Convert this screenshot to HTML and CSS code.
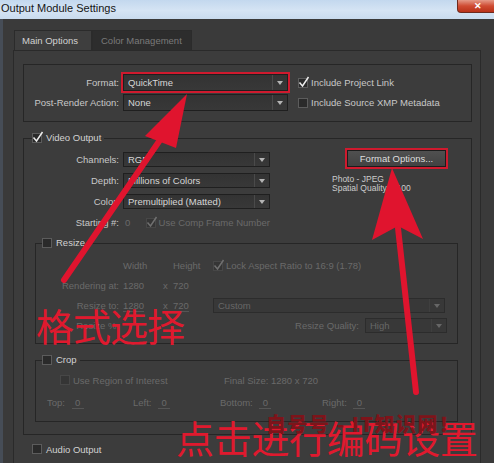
FILE: index.html
```html
<!DOCTYPE html>
<html>
<head>
<meta charset="utf-8">
<title>Output Module Settings</title>
<link rel="stylesheet" href="styles.css">
</head>
<body>
<div class="titlebar">
  <span class="title">Output Module Settings</span>
  <span class="close">✕</span>
</div>
<div class="dialog">
  <div class="tabs">
    <div class="tab active">Main Options</div>
    <div class="tab">Color Management</div>
  </div>
  <div class="panel">
    <div class="topbox">
      <div class="row">
        <span class="lbl">Format:</span>
        <div class="select w165 hl"><span class="val">QuickTime</span><span class="arr"></span></div>
        <span class="check"><span class="cb on"><svg viewBox="0 0 12 12"><path d="M1.5 6.5 L4.5 10 L10.5 1"/></svg></span>Include Project Link</span>
      </div>
      <div class="row">
        <span class="lbl">Post-Render Action:</span>
        <div class="select w165"><span class="val">None</span><span class="arr"></span></div>
        <span class="check"><span class="cb"></span>Include Source XMP Metadata</span>
      </div>
    </div>

    <fieldset class="group video">
      <legend><span class="cb on"><svg viewBox="0 0 12 12"><path d="M1.5 6.5 L4.5 10 L10.5 1"/></svg></span>Video Output</legend>
      <div class="vid-top">
        <div class="vid-left">
          <div class="vrow"><span class="lbl">Channels:</span><div class="select sm w147"><span class="val">RGB</span><span class="arr"></span></div></div>
          <div class="vrow"><span class="lbl">Depth:</span><div class="select sm w147"><span class="val">Millions of Colors</span><span class="arr"></span></div></div>
          <div class="vrow"><span class="lbl">Color:</span><div class="select sm w147"><span class="val">Premultiplied (Matted)</span><span class="arr"></span></div></div>
          <div class="vrow"><span class="lbl">Starting #:</span><span class="num dis">0</span><span class="check dis"><span class="cb on dim"><svg viewBox="0 0 12 12"><path d="M1.5 6.5 L4.5 10 L10.5 1"/></svg></span>Use Comp Frame Number</span></div>
        </div>
        <div class="vid-right">
          <div class="btn hl">Format Options...</div>
          <div class="info">Photo - JPEG<br>Spatial Quality = 100</div>
        </div>
      </div>

      <fieldset class="group sub resize">
        <legend><span class="cb"></span>Resize</legend>
        <div class="rgrid">
          <span></span><span>Width</span><span></span><span>Height</span>
          <span class="check dis"><span class="cb on dim"><svg viewBox="0 0 12 12"><path d="M1.5 6.5 L4.5 10 L10.5 1"/></svg></span>Lock Aspect Ratio to 16:9 (1.78)</span>

          <span class="rl">Rendering at:</span><span>1280</span><span>x</span><span>720</span><span></span>

          <span class="rl">Resize to:</span><span><span class="u">1280</span></span><span>x</span><span><span class="u">720</span></span>
          <div class="select sm dsel w232"><span class="val">Custom</span><span class="arr"></span></div>

          <span class="rl">Resize %:</span><span></span><span></span><span></span>
          <span class="rq">Resize Quality:<div class="select sm dsel w82"><span class="val">High</span><span class="arr"></span></div></span>
        </div>
      </fieldset>

      <fieldset class="group sub crop">
        <legend><span class="cb"></span>Crop</legend>
        <div class="crow1">
          <span class="check dis roi"><span class="cb dim"></span>Use Region of Interest</span>
          <span>Final Size: 1280 x 720</span>
        </div>
        <div class="crow2">
          <span class="ci c-top">Top: <span class="u">0</span></span>
          <span class="ci c-left">Left: <span class="u">0</span></span>
          <span class="ci c-bottom">Bottom: <span class="u">0</span></span>
          <span class="ci c-right">Right: <span class="u">0</span></span>
        </div>
      </fieldset>
    </fieldset>

    <div class="audio"><span class="cb"></span>Audio Output</div>
  </div>
</div>

<svg class="annot" width="494" height="463" viewBox="0 0 494 463">
  <line x1="64" y1="280" x2="160" y2="140" stroke="#e0142e" stroke-width="6" stroke-linecap="round"/>
  <polygon points="187,94 176,148 145,136" fill="#e0142e"/>
  <line x1="416" y1="392" x2="398" y2="228" stroke="#e0142e" stroke-width="6" stroke-linecap="round"/>
  <polygon points="392,168 423,239 398,226 372,240" fill="#e0142e"/>
</svg>
<div class="cn cn1">格式选择</div>
<div class="cn cn2">点击进行编码设置</div>
<div class="wm">自号号 - IT知识网！</div>
</body>
</html>
```

FILE: styles.css
```css
* { box-sizing: border-box; }
html, body { margin: 0; padding: 0; }
body {
  width: 494px;
  height: 463px;
  overflow: hidden;
  position: relative;
  background: #3a3a3a;
  font-family: "Liberation Sans", Arial, sans-serif;
  font-size: 9.5px;
  color: #c8c8c8;
}

/* title bar */
.titlebar {
  height: 19px;
  display: flex;
  justify-content: space-between;
  align-items: flex-start;
  background: linear-gradient(180deg, #c3d8ee 0%, #d5e4f4 55%, #c9dbee 100%);
}
.title {
  font-size: 11px;
  line-height: 16px;
  color: #151515;
  padding-left: 1px;
}
.close {
  width: 42px;
  height: 13px;
  margin-right: -5px;
  background: linear-gradient(180deg, #e59a88 0%, #cf4b32 50%, #b93219 100%);
  border: 1px solid #6e2a1e;
  border-top: none;
  border-radius: 0 0 0 4px;
  color: #fff;
  font-size: 9px;
  font-weight: bold;
  text-align: center;
  line-height: 12px;
}

/* dialog body */
.dialog {
  height: 444px;
  border-left: 3px solid #464d57;
  padding: 11px 0 0 10px;
}
.tabs {
  display: flex;
  height: 20px;
  margin-left: 1px;
}
.tab {
  height: 20px;
  line-height: 20px;
  border: 1px solid #2b2b2b;
  border-bottom: none;
}
.tab.active {
  width: 78px;
  padding-left: 7px;
  background: #3e3e3e;
  color: #d2d2d2;
}
.tab:not(.active) {
  width: 100px;
  padding-left: 8px;
  background: #2d2d2d;
  color: #7a7a7a;
}
.panel {
  width: 468px;
  height: 420px;
  border: 1px solid #2a2a2a;
  background: #3c3c3c;
  padding: 13px 0 0 9px;
}

.topbox {
  width: 449px;
  height: 58px;
  border: 1px solid #262626;
  padding-top: 9px;
}
.row {
  display: flex;
  align-items: center;
  height: 17px;
  margin-bottom: 3px;
}
.lbl {
  flex: none;
  width: 95px;
  margin-right: 4px;
  text-align: right;
  white-space: nowrap;
}

/* dropdowns */
.select {
  flex: none;
  display: flex;
  align-items: center;
  height: 17px;
  background: linear-gradient(180deg, #333333, #383838);
  border: 1px solid #1f1f1f;
  color: #d6d6d6;
}
.select .val {
  flex: 1;
  padding-left: 4px;
  white-space: nowrap;
  overflow: hidden;
}
.select .arr {
  flex: none;
  width: 15px;
  height: 100%;
  border-left: 1px solid #4a4a4a;
  display: flex;
  align-items: center;
  justify-content: center;
}
.select .arr::before {
  content: "";
  border-left: 3px solid transparent;
  border-right: 3px solid transparent;
  border-top: 4px solid #b4b4b4;
}
.select.sm { height: 15px; }
.w165 { width: 165px; }
.w147 { width: 147px; }
.w232 { width: 232px; }
.w82 { width: 82px; }
.dsel {
  background: #383838;
  border-color: #2c2c2c;
  color: #676767;
}
.dsel .arr { border-left-color: #3f3f3f; }
.dsel .arr::before { border-top-color: #666; }

.hl { box-shadow: 0 0 0 2px #cf1a2e; }

/* checkboxes */
.check {
  display: flex;
  align-items: center;
  white-space: nowrap;
  margin-left: 10px;
}
.cb {
  position: relative;
  flex: none;
  display: inline-block;
  width: 10px;
  height: 10px;
  margin-right: 3px;
  background: #2a2a2a;
  border: 1px solid #5c5c5c;
}
.cb svg {
  position: absolute;
  left: -1px;
  top: -3px;
  width: 12px;
  height: 12px;
}
.cb svg path {
  fill: none;
  stroke: #ececec;
  stroke-width: 1.5;
}
.cb.dim { background: #353535; border-color: #474747; }
.cb.dim svg path { stroke: #707070; }
.dis { color: #6a6a6a; }

/* group boxes */
.group {
  margin: 0;
  border: 1px solid #262626;
  min-width: 0;
}
legend {
  display: flex;
  align-items: center;
  height: 14px;
  line-height: 14px;
  padding: 0 3px 0 0;
  color: #d2d2d2;
}
legend .cb { margin-right: 4px; }
.video {
  width: 449px;
  margin-top: 9px;
  padding: 5px 0 12px 0;
}
.video > legend { margin-left: 8px; }

.vid-top { display: flex; }
.vid-left {
  width: 246px;
  padding-top: 2px;
}
.vrow {
  display: flex;
  align-items: center;
  height: 15px;
  margin-bottom: 6px;
}
.num {
  width: 40px;
  padding-left: 2px;
}
.vrow .check { margin-left: 0; }
.vid-right {
  margin-left: 62px;
  display: flex;
  flex-direction: column;
}
.btn {
  margin-left: 15px;
  width: 99px;
  height: 17px;
  line-height: 15px;
  text-align: center;
  background: linear-gradient(180deg, #505050, #424242);
  border: 1px solid #1c1c1c;
  color: #dedede;
}
.info {
  margin-top: 8px;
  font-size: 8.5px;
  line-height: 9px;
  color: #cccccc;
}

.sub {
  width: 423px;
  margin-left: 11px;
}
.sub > legend { margin-left: 6px; }
.resize { padding: 8px 0 10px 0; }
.rgrid {
  display: grid;
  grid-template-columns: 87px 40px 10px 40px 1fr;
  grid-auto-rows: 15px;
  row-gap: 5px;
  align-items: center;
  color: #6a6a6a;
  white-space: nowrap;
}
.rgrid .check { margin-left: 0; }
.rl {
  text-align: right;
  padding-right: 4px;
}
.u {
  display: inline-block;
  border-bottom: 1px solid #555;
  line-height: 11px;
}
.rq {
  display: flex;
  align-items: center;
  justify-content: flex-end;
  padding-right: 10px;
}
.rq .select { margin-left: 6px; }

.crop {
  margin-top: 9px;
  padding: 6px 0 11px 0;
  color: #6a6a6a;
}
.crow1 {
  display: flex;
  align-items: center;
  height: 14px;
  padding-left: 24px;
}
.crow1 .roi {
  margin-left: 0;
  width: 164px;
}
.crow2 {
  display: flex;
  align-items: center;
  height: 14px;
  margin-top: 9px;
  padding-left: 11px;
}
.ci { flex: none; white-space: nowrap; }
.ci .u { width: 12px; text-align: center; margin-left: 4px; }
.c-top { width: 86px; }
.c-left { width: 87px; }
.c-bottom { width: 102px; }

.audio {
  display: flex;
  align-items: center;
  height: 12px;
  margin: 8px 0 0 9px;
  color: #d2d2d2;
}
.audio .cb { margin-right: 4px; }

/* red annotations drawn over the screenshot */
.annot {
  position: absolute;
  left: 0;
  top: 0;
  pointer-events: none;
}
.cn {
  position: absolute;
  font-family: "Noto Sans CJK SC", sans-serif;
  line-height: 1;
  color: #e0192e;
  white-space: nowrap;
}
.cn1 {
  left: 36px;
  top: 306px;
  font-size: 38px;
  letter-spacing: -1px;
}
.cn2 {
  left: 176px;
  top: 418px;
  font-size: 38px;
  letter-spacing: -0.3px;
}
.wm {
  position: absolute;
  left: 266px;
  top: 414px;
  font-family: "Noto Sans CJK SC", sans-serif;
  font-weight: 900;
  font-size: 20px;
  line-height: 1;
  letter-spacing: 1.5px;
  color: #7e141a;
  white-space: nowrap;
}
```
